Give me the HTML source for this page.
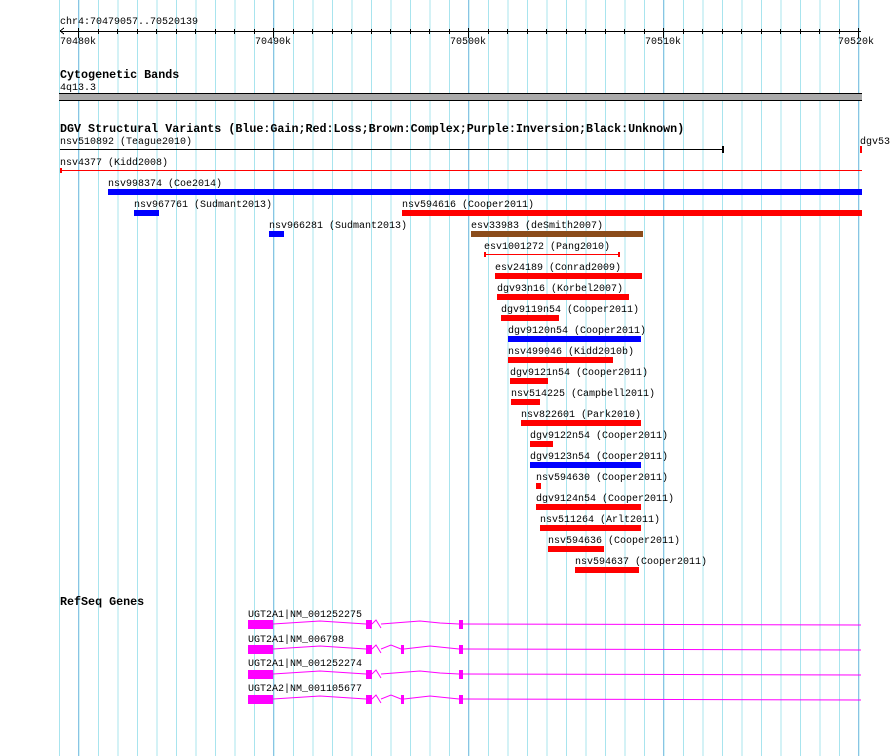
<!DOCTYPE html>
<html><head><meta charset="utf-8"><style>
html,body{margin:0;padding:0;background:#fff;}
svg{display:block;}
text{font-family:"Liberation Mono",monospace;font-size:10px;fill:#000;}
.b{font-weight:bold;font-size:11.7px;}
</style></head><body>
<svg width="890" height="756" viewBox="0 0 890 756" xmlns="http://www.w3.org/2000/svg" shape-rendering="crispEdges">
<defs>
<pattern id="g" x="59" y="0" width="19.5" height="756" patternUnits="userSpaceOnUse">
<rect x="0" y="0" width="1" height="756" fill="#a8e4ee"/>
</pattern>
</defs>
<rect x="59" y="0" width="802" height="756" fill="url(#g)"/>
<g fill="#88c4e4">
<rect x="78" y="0" width="1" height="756"/><rect x="273" y="0" width="1" height="756"/><rect x="468" y="0" width="1" height="756"/><rect x="663" y="0" width="1" height="756"/><rect x="858" y="0" width="1" height="756"/>
</g>
<text x="60" y="24">chr4:70479057..70520139</text>
<rect x="60" y="31" width="801" height="1" fill="#000"/>
<path d="M60 31 L64 28 M60 31 L64 34" stroke="#000" fill="none"/>
<g fill="#000">
<rect x="78" y="28" width="1" height="10"/><rect x="273" y="28" width="1" height="10"/><rect x="468" y="28" width="1" height="10"/><rect x="663" y="28" width="1" height="10"/><rect x="858" y="28" width="1" height="10"/>
<rect x="98" y="29" width="1" height="5"/><rect x="117" y="29" width="1" height="5"/><rect x="137" y="29" width="1" height="5"/><rect x="156" y="29" width="1" height="5"/><rect x="176" y="29" width="1" height="5"/><rect x="195" y="29" width="1" height="5"/><rect x="215" y="29" width="1" height="5"/><rect x="234" y="29" width="1" height="5"/><rect x="254" y="29" width="1" height="5"/>
<rect x="293" y="29" width="1" height="5"/><rect x="312" y="29" width="1" height="5"/><rect x="332" y="29" width="1" height="5"/><rect x="351" y="29" width="1" height="5"/><rect x="371" y="29" width="1" height="5"/><rect x="390" y="29" width="1" height="5"/><rect x="410" y="29" width="1" height="5"/><rect x="429" y="29" width="1" height="5"/><rect x="449" y="29" width="1" height="5"/>
<rect x="488" y="29" width="1" height="5"/><rect x="507" y="29" width="1" height="5"/><rect x="527" y="29" width="1" height="5"/><rect x="546" y="29" width="1" height="5"/><rect x="566" y="29" width="1" height="5"/><rect x="585" y="29" width="1" height="5"/><rect x="605" y="29" width="1" height="5"/><rect x="624" y="29" width="1" height="5"/><rect x="644" y="29" width="1" height="5"/>
<rect x="683" y="29" width="1" height="5"/><rect x="702" y="29" width="1" height="5"/><rect x="722" y="29" width="1" height="5"/><rect x="741" y="29" width="1" height="5"/><rect x="761" y="29" width="1" height="5"/><rect x="780" y="29" width="1" height="5"/><rect x="800" y="29" width="1" height="5"/><rect x="819" y="29" width="1" height="5"/><rect x="839" y="29" width="1" height="5"/>
</g>
<text x="60" y="44">70480k</text><text x="255" y="44">70490k</text><text x="450" y="44">70500k</text><text x="645" y="44">70510k</text><text x="838" y="44">70520k</text>
<text class="b" x="60" y="78">Cytogenetic Bands</text>
<text x="60" y="90">4q13.3</text>
<rect x="59" y="93" width="803" height="1" fill="#000"/>
<rect x="59" y="94" width="803" height="6" fill="#aaa"/>
<rect x="59" y="100" width="803" height="1" fill="#000"/>
<text class="b" x="60" y="132">DGV Structural Variants (Blue:Gain;Red:Loss;Brown:Complex;Purple:Inversion;Black:Unknown)</text>
<text x="60" y="144">nsv510892 (Teague2010)</text>
<rect x="60" y="149" width="663" height="1" fill="#000"/><rect x="722" y="146" width="2" height="7" fill="#000"/>
<text x="860" y="144">dgv53</text><rect x="860" y="146" width="2" height="7" fill="#f00"/>
<text x="60" y="165">nsv4377 (Kidd2008)</text>
<rect x="60" y="170" width="802" height="1" fill="#f00"/><rect x="60" y="168" width="2" height="5" fill="#f00"/>
<text x="108" y="186">nsv998374 (Coe2014)</text><rect x="108" y="189" width="754" height="6" fill="#00f"/>
<text x="134" y="207">nsv967761 (Sudmant2013)</text><rect x="134" y="210" width="25" height="6" fill="#00f"/>
<text x="402" y="207">nsv594616 (Cooper2011)</text><rect x="402" y="210" width="460" height="6" fill="#f00"/>
<text x="269" y="228">nsv966281 (Sudmant2013)</text><rect x="269" y="231" width="15" height="6" fill="#00f"/>
<text x="471" y="228">esv33983 (deSmith2007)</text><rect x="471" y="231" width="172" height="6" fill="#8b4c1a"/>
<text x="484" y="249">esv1001272 (Pang2010)</text><rect x="484" y="254" width="135" height="1" fill="#f00"/><rect x="484" y="252" width="2" height="5" fill="#f00"/><rect x="618" y="252" width="2" height="5" fill="#f00"/>
<text x="495" y="270">esv24189 (Conrad2009)</text><rect x="495" y="273" width="147" height="6" fill="#f00"/>
<text x="497" y="291">dgv93n16 (Korbel2007)</text><rect x="497" y="294" width="132" height="6" fill="#f00"/>
<text x="501" y="312">dgv9119n54 (Cooper2011)</text><rect x="501" y="315" width="58" height="6" fill="#f00"/>
<text x="508" y="333">dgv9120n54 (Cooper2011)</text><rect x="508" y="336" width="133" height="6" fill="#00f"/>
<text x="508" y="354">nsv499046 (Kidd2010b)</text><rect x="508" y="357" width="105" height="6" fill="#f00"/>
<text x="510" y="375">dgv9121n54 (Cooper2011)</text><rect x="510" y="378" width="38" height="6" fill="#f00"/>
<text x="511" y="396">nsv514225 (Campbell2011)</text><rect x="511" y="399" width="29" height="6" fill="#f00"/>
<text x="521" y="417">nsv822601 (Park2010)</text><rect x="521" y="420" width="120" height="6" fill="#f00"/>
<text x="530" y="438">dgv9122n54 (Cooper2011)</text><rect x="530" y="441" width="23" height="6" fill="#f00"/>
<text x="530" y="459">dgv9123n54 (Cooper2011)</text><rect x="530" y="462" width="111" height="6" fill="#00f"/>
<text x="536" y="480">nsv594630 (Cooper2011)</text><rect x="536" y="483" width="5" height="6" fill="#f00"/>
<text x="536" y="501">dgv9124n54 (Cooper2011)</text><rect x="536" y="504" width="105" height="6" fill="#f00"/>
<text x="540" y="522">nsv511264 (Arlt2011)</text><rect x="540" y="525" width="101" height="6" fill="#f00"/>
<text x="548" y="543">nsv594636 (Cooper2011)</text><rect x="548" y="546" width="56" height="6" fill="#f00"/>
<text x="575" y="564">nsv594637 (Cooper2011)</text><rect x="575" y="567" width="64" height="6" fill="#f00"/>
<text class="b" x="60" y="605">RefSeq Genes</text>
<text x="248" y="617">UGT2A1|NM_001252275</text>
<text x="248" y="642">UGT2A1|NM_006798</text>
<text x="248" y="666">UGT2A1|NM_001252274</text>
<text x="248" y="691">UGT2A2|NM_001105677</text>
<g fill="#f0f">
<rect x="248" y="620" width="25" height="9"/><rect x="366" y="620" width="6" height="9"/><rect x="459" y="620" width="4" height="9"/>
<rect x="248" y="645" width="25" height="9"/><rect x="366" y="645" width="6" height="9"/><rect x="401" y="645" width="3" height="9"/><rect x="459" y="645" width="4" height="9"/>
<rect x="248" y="670" width="25" height="9"/><rect x="366" y="670" width="6" height="9"/><rect x="459" y="670" width="4" height="9"/>
<rect x="248" y="695" width="25" height="9"/><rect x="366" y="695" width="6" height="9"/><rect x="401" y="695" width="3" height="9"/><rect x="459" y="695" width="4" height="9"/>
</g>
<g stroke="#f0f" fill="none" shape-rendering="auto">
<path d="M273 624 L320 621 L366 624 M372 624 L376 620 L381 628 M381 624 L420 621 L440 623 L459 624 M463 624 L861 625"/>
<path d="M273 649 L320 646 L366 649 M372 649 L376 645 L381 653 M381 649 L391 645 L401 649 M404 649 L430 646 L459 649 M463 649 L861 650"/>
<path d="M273 674 L320 671 L366 674 M372 674 L376 670 L381 678 M381 674 L420 671 L440 673 L459 674 M463 674 L861 675"/>
<path d="M273 699 L320 696 L366 699 M372 699 L376 695 L381 703 M381 699 L391 695 L401 699 M404 699 L430 696 L459 699 M463 699 L861 700"/>
</g>
</svg>
</body></html>
